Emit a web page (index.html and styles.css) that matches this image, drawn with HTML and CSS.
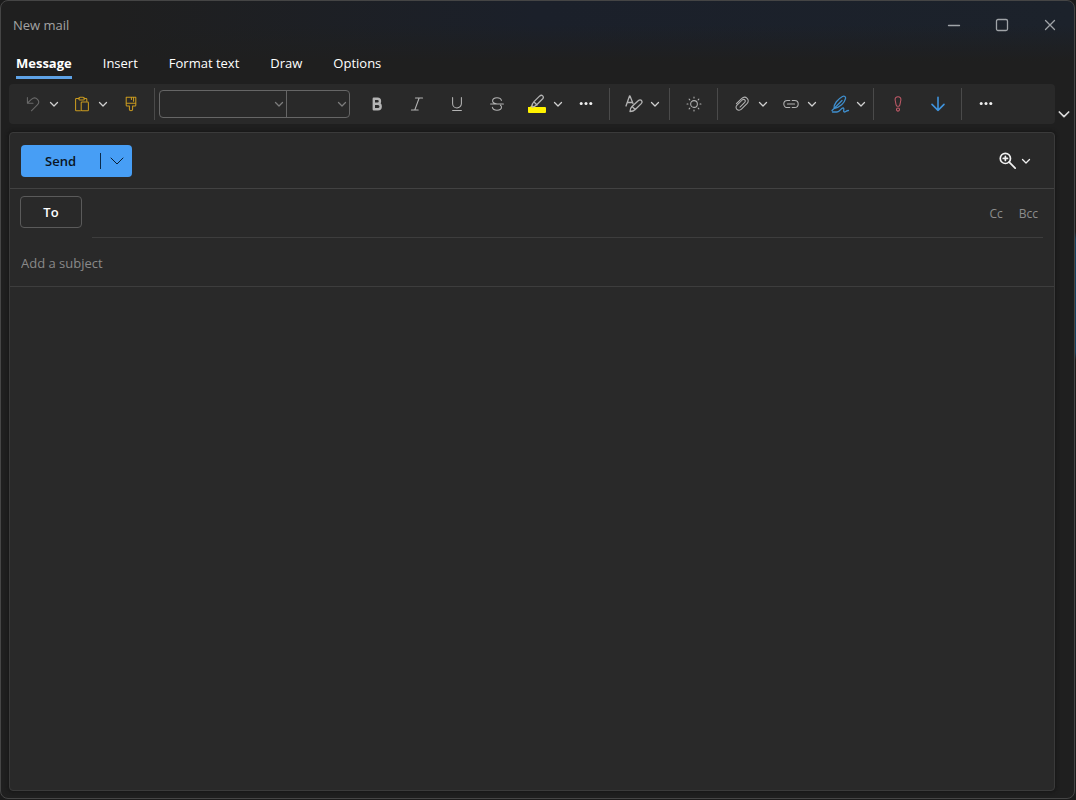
FILE: index.html
```html
<!DOCTYPE html>
<html lang="en">
<head>
  <meta charset="utf-8">
  <title>New mail</title>
  <meta name="viewport" content="width=device-width, initial-scale=1">
  <link rel="stylesheet" href="styles.css">
</head>
<body>
  <!-- Shared chevron -->
  <svg class="defs" aria-hidden="true">
    <symbol id="chevron" viewBox="0 0 12 12"><path d="M2.500 4.500 6 8l3.500-3.500"/></symbol>
  </svg>

  <div class="window">
    <header class="titlebar">
      <h1>New mail</h1>
      <div class="window-buttons">
        <button type="button" aria-label="Minimize"><svg viewBox="0 0 16 16"><path d="M2.500 8.500h11"/></svg></button>
        <button type="button" aria-label="Maximize"><svg viewBox="0 0 16 16"><rect x="2.500" y="2.500" width="11" height="11" rx="1.500"/></svg></button>
        <button type="button" aria-label="Close"><svg viewBox="0 0 16 16"><path d="m3.500 3.500 9 9M12.500 3.500l-9 9"/></svg></button>
      </div>
    </header>

    <nav class="tabs">
      <button type="button" class="tab active">Message</button>
      <button type="button" class="tab">Insert</button>
      <button type="button" class="tab">Format text</button>
      <button type="button" class="tab">Draw</button>
      <button type="button" class="tab">Options</button>
    </nav>

    <div class="ribbon-row">
      <div class="ribbon">
        <div class="group">
          <div class="split">
            <button type="button" class="icon-btn dim" aria-label="Undo"><svg viewBox="0 0 20 20"><path d="M3 2v7h7M3.300 8.700 8 4.300c2.300-2.100 5.600-2.200 7.600-.2 2 2.100 1.900 5-.2 7.100L8 18.500"/></svg></button>
            <button type="button" class="chev" aria-label="Undo options"><svg><use href="#chevron"/></svg></button>
          </div>
          <div class="split">
            <button type="button" class="icon-btn gold" aria-label="Paste"><svg viewBox="0 0 20 20"><path d="M6.500 3H3a1 1 0 0 0-1 1v13.500a1 1 0 0 0 1 1h5M12.500 3H15a1 1 0 0 1 1 1v2.500"/><rect x="6" y="1.500" width="7" height="3.500" rx="1.700"/><rect x="9" y="7.500" width="9" height="11" rx="1"/></svg></button>
            <button type="button" class="chev" aria-label="Paste options"><svg><use href="#chevron"/></svg></button>
          </div>
          <button type="button" class="icon-btn gold" aria-label="Format painter"><svg viewBox="0 0 20 20"><path d="M4 1.500h12v10a1 1 0 0 1-1 1h-3v4a2 2 0 0 1-4 0v-4H5a1 1 0 0 1-1-1zM4 9h12M10.500 1.500v3M13.200 1.500v5"/></svg></button>
        </div>

        <div class="group format">
          <div class="combo">
            <div class="pick font">
              <select aria-label="Font"><option></option></select>
              <svg><use href="#chevron"/></svg>
            </div>
            <div class="pick size">
              <select aria-label="Font size"><option></option></select>
              <svg><use href="#chevron"/></svg>
            </div>
          </div>
          <button type="button" class="icon-btn" aria-label="Bold"><svg class="bold" viewBox="0 0 20 20"><path d="M6 3.500v13h5.200a3.400 3.400 0 0 0 0-6.800H6h4.600a3.100 3.100 0 0 0 0-6.200z"/></svg></button>
          <button type="button" class="icon-btn" aria-label="Italic"><svg viewBox="0 0 20 20"><path d="M8 2.500h9M3 17.500h8.500M12.700 2.500l-5.500 15"/></svg></button>
          <button type="button" class="icon-btn" aria-label="Underline"><svg viewBox="0 0 20 20"><path d="M4.500 2v7.500a5.500 5.500 0 0 0 11 0V2M4.500 18h11"/></svg></button>
          <button type="button" class="icon-btn" aria-label="Strikethrough"><svg viewBox="0 0 20 20"><path d="M15.500 5.500C15 3.400 12.900 2.200 10 2.200c-3 0-5.500 1.500-5.500 4 0 2.100 1.900 3.100 5.500 3.800M2 10h16M14.300 11.500c.9.600 1.300 1.300 1.300 2.300 0 2.400-2.400 4-5.600 4-3 0-5.200-1.300-5.800-3.600"/></svg></button>
          <div class="split">
            <button type="button" class="icon-btn" aria-label="Highlight color"><svg class="wide" viewBox="0 0 20 20"><path class="marker" d="M1 13h2l2-2 3 2h10a1 1 0 0 1 1 1v4a1 1 0 0 1-1 1H2a1 1 0 0 1-1-1z"/><path class="pen" d="M5 13c-.3-2.700.3-3.700 2-5.400l5.800-5.700c1-.9 2.200-.7 2.900 0s.8 1.900 0 2.800L10 10.500C8.300 12.300 7.300 13 5 13zM7 8l3 3"/></svg></button>
            <button type="button" class="chev" aria-label="Highlight options"><svg><use href="#chevron"/></svg></button>
          </div>
          <button type="button" class="icon-btn dots" aria-label="More formatting"><svg viewBox="0 0 20 20"><circle cx="4" cy="9.500" r="1.900"/><circle cx="10" cy="9.500" r="1.900"/><circle cx="16" cy="9.500" r="1.900"/></svg></button>
        </div>

        <div class="group">
          <div class="split">
            <button type="button" class="icon-btn" aria-label="Styles"><svg class="wide" viewBox="0 0 20 20"><path d="m2 12 3.500-10h.500l3 7.500M3.500 8.500h4.500M8 12.500l6.500-6c1-.9 2.300-.8 3 0s.8 2 0 2.900l-6.200 6.100c-1.500 1.400-2.800 2-5.300 2 0-2.500.5-3.600 2-5zM8 12.500l3.300 3"/></svg></button>
            <button type="button" class="chev" aria-label="Style options"><svg><use href="#chevron"/></svg></button>
          </div>
        </div>

        <div class="group">
          <button type="button" class="icon-btn" aria-label="Switch background"><svg viewBox="0 0 20 20"><circle cx="10" cy="10" r="4.200"/><path d="M10 1.300v1.200M10 17.500v1.200M1.300 10h1.200M17.500 10h1.200M3.900 3.900l.9.900M15.200 15.200l.9.900M3.900 16.100l.9-.9M15.200 4.800l.9-.9"/></svg></button>
        </div>

        <div class="group attach">
          <div class="split">
            <button type="button" class="icon-btn" aria-label="Attach file"><svg viewBox="0 0 20 20"><path d="m3 9.500 6.500-6.300c2.200-2 5-2.100 6.900-.3s1.800 4.600-.2 6.700l-6.900 6.900c-1.700 1.700-4.200 1.700-5.700.2s-1.400-3.800.2-5.400L10.300 5c1-1 2.400-1 3.200-.1s.8 2.100-.1 3.100L7.500 13.800"/></svg></button>
            <button type="button" class="chev" aria-label="Attach options"><svg><use href="#chevron"/></svg></button>
          </div>
          <div class="split">
            <button type="button" class="icon-btn" aria-label="Link"><svg viewBox="0 0 20 20"><path d="M8.500 14.500H5.500a4.500 4.500 0 0 1 0-9h3M11.500 5.500h3a4.500 4.500 0 0 1 0 9h-3M5.500 10h9"/></svg></button>
            <button type="button" class="chev" aria-label="Link options"><svg><use href="#chevron"/></svg></button>
          </div>
          <div class="split">
            <button type="button" class="icon-btn blue" aria-label="Signature"><svg class="wide" viewBox="0 0 20 20"><path d="M4 14.500C3.500 10 8 5 12.500 2.500c1.800-1 3.500.3 3 2.200C14.500 9 10 13.500 4 14.500zM2 16.500 12 6.500M2.500 18H7c3 0 4-4 6-4s-.5 4 1.500 4c1.300 0 1.500-1.500 4-1.500"/></svg></button>
            <button type="button" class="chev" aria-label="Signature options"><svg><use href="#chevron"/></svg></button>
          </div>
        </div>

        <div class="group priority">
          <button type="button" class="icon-btn red" aria-label="High importance"><svg viewBox="0 0 20 20"><path d="M10 1c2.400 0 3.900 1.700 3.600 4l-1.300 6.300c-.4 2.100-4.200 2.100-4.600 0L6.400 5C6.100 2.700 7.600 1 10 1z"/><circle cx="10" cy="17" r="1.900"/></svg></button>
          <button type="button" class="icon-btn arrow" aria-label="Low importance"><svg viewBox="0 0 20 20"><path d="M10 1.500V18M2.500 10.500 10 18l7.500-7.500"/></svg></button>
        </div>

        <div class="group">
          <button type="button" class="icon-btn dots" aria-label="More options"><svg viewBox="0 0 20 20"><circle cx="4" cy="9.500" r="1.900"/><circle cx="10" cy="9.500" r="1.900"/><circle cx="16" cy="9.500" r="1.900"/></svg></button>
        </div>
      </div>
      <button type="button" class="collapse" aria-label="Ribbon display options"><svg><use href="#chevron"/></svg></button>
    </div>

    <main class="compose">
      <div class="send-row">
        <div class="send">
          <button type="button" class="send-btn">Send</button>
          <button type="button" class="send-more" aria-label="More send options"><svg viewBox="0 0 14 14"><path d="m1 4 6 6 6-6"/></svg></button>
        </div>
        <button type="button" class="zoom" aria-label="Zoom">
          <svg class="lens" viewBox="0 0 20 20"><circle cx="7.500" cy="7.500" r="6"/><path d="M7.500 5v5M5 7.500h5M12 12l7 7"/></svg>
          <svg class="small"><use href="#chevron"/></svg>
        </button>
      </div>
      <div class="to-row">
        <button type="button" class="to-btn">To</button>
        <div class="to-field">
          <input type="text" aria-label="To">
          <button type="button">Cc</button>
          <button type="button">Bcc</button>
        </div>
      </div>
      <input type="text" class="subject" aria-label="Subject" placeholder="Add a subject">
      <textarea class="message" aria-label="Message body"></textarea>
    </main>
  </div>
</body>
</html>
```

FILE: styles.css
```css
* {
  box-sizing: border-box;
}
body {
  margin: 0;
  min-height: 100vh;
  display: flex;
  padding: 0 1px 1px 0;
  background: linear-gradient(#1b1b1b 29%, #123f5c 30%, #123f5c 44%, #1b1b1b 45%);
  font-family: "Open Sans", "Noto Sans", sans-serif;
  font-size: 13px;
  color: #fff;
}
button,
input,
select,
textarea {
  font: inherit;
  color: inherit;
  background: none;
  border: none;
  padding: 0;
  margin: 0;
  outline: none;
}
svg {
  display: block;
  fill: none;
  stroke: currentColor;
  stroke-width: 1.3;
  stroke-linecap: round;
  stroke-linejoin: round;
}
.defs {
  position: absolute;
  width: 0;
  height: 0;
}
.window {
  flex: 1;
  min-width: 0;
  display: flex;
  flex-direction: column;
  padding: 0 19px 7px 8px;
  border: 1px solid #454545;
  border-radius: 8px;
  background:
    linear-gradient(transparent 24px, #1f1f1f 60px),
    linear-gradient(90deg, #1f1f1f 10%, #1b202a 50%, #1c222b);
}

/* Title bar */
.titlebar {
  display: flex;
  justify-content: space-between;
  align-items: center;
  height: 48px;
  padding-left: 4px;
}
.titlebar h1 {
  margin: 0;
  font-size: 13px;
  font-weight: 400;
  color: #a3a3a3;
}
.window-buttons {
  display: flex;
  margin-right: -19px;
  color: #a0a4a8;
}
.window-buttons button {
  width: 48px;
  height: 32px;
  display: grid;
  place-items: center;
}
.window-buttons svg {
  width: 16px;
  height: 16px;
}

/* Ribbon tabs */
.tabs {
  display: flex;
  gap: 31px;
  height: 35px;
  padding: 1px 0 0 7px;
}
.tab {
  height: 29px;
  border-bottom: 3px solid transparent;
}
.tab.active {
  font-weight: 700;
  border-color: #5ea2e6;
}

/* Ribbon */
.ribbon-row {
  display: flex;
  margin-right: -19px;
}
.ribbon {
  flex: 1;
  display: flex;
  align-items: center;
  height: 40px;
  border-radius: 4px;
  background: #292929;
}
.group {
  display: flex;
  align-items: center;
  gap: 7px;
  height: 32px;
  padding: 0 8px 0 9px;
  border-right: 1px solid #4a4a4a;
  color: #b4b4b4;
}
.group:last-child {
  border-right: none;
}
.format {
  gap: 10px;
  padding-left: 4px;
}
.format .dots {
  margin-left: -3px;
}
.priority {
  gap: 10px;
}
.attach {
  padding-right: 6px;
}
.split {
  display: flex;
}
.icon-btn {
  width: 30px;
  height: 30px;
  display: grid;
  place-items: center;
}
.icon-btn svg {
  width: 16px;
  height: 16px;
}
.icon-btn .wide {
  width: 20px;
  height: 20px;
}
.icon-btn .bold {
  stroke-width: 3;
}
.chev {
  width: 12px;
  color: #d0d0d0;
}
.chev svg {
  width: 12px;
  height: 12px;
}
.dim {
  color: #6a6a6a;
}
.gold {
  color: #c99a1f;
}
.blue {
  color: #3f8fce;
}
.red {
  color: #c05a68;
}
.arrow {
  color: #3f93dc;
}
.arrow svg {
  stroke-width: 2;
}
.icon-btn.dots svg {
  fill: #f0f0f0;
  stroke: none;
}
.marker {
  fill: #fff200;
  stroke: none;
}
.pen {
  fill: #292929;
}
.combo {
  display: flex;
  height: 28px;
  margin-right: 2px;
  border: 1px solid #666;
  border-radius: 4px;
}
.pick {
  display: grid;
  align-items: center;
  color: #7c7c7c;
}
.pick select,
.pick svg {
  grid-area: 1 / 1;
}
.pick select {
  appearance: none;
  width: 100%;
  height: 26px;
}
.pick svg {
  width: 12px;
  height: 12px;
  margin-right: 1px;
  justify-self: end;
  pointer-events: none;
}
.font {
  width: 127px;
  border-right: 1px solid #666;
}
.size {
  width: 62px;
}
.collapse {
  width: 19px;
  padding: 20px 0 0 1px;
  color: #d8d8d8;
}
.collapse svg {
  width: 16px;
  height: 16px;
}

/* Compose card */
.compose {
  flex: 1;
  display: flex;
  flex-direction: column;
  margin-top: 8px;
  border: 1px solid #3a3a3a;
  border-radius: 4px;
  background: #292929;
  box-shadow: 0 0 4px #111;
}
.send-row {
  display: flex;
  align-items: center;
  justify-content: space-between;
  height: 56px;
  padding: 0 22px 0 11px;
  border-bottom: 1px solid #424242;
}
.send {
  display: flex;
  align-items: center;
  height: 32px;
  border-radius: 4px;
  background: #479ef5;
  color: #0b1f33;
}
.send-btn {
  width: 79px;
  height: 32px;
  font-weight: 600;
  color: #0a1422;
}
.send-more {
  width: 32px;
  height: 16px;
  border-left: 1px solid #0a2a4a;
  display: grid;
  place-items: center;
}
.send-more svg {
  width: 14px;
  height: 14px;
  stroke-width: 1;
}
.zoom {
  display: flex;
  align-items: center;
  gap: 4px;
  color: #f0f0f0;
}
.lens {
  width: 17px;
  height: 17px;
  stroke-width: 2;
}
.small {
  width: 12px;
  height: 12px;
}
.to-row {
  display: flex;
  gap: 10px;
  height: 49px;
  padding: 0 11px 0 10px;
}
.to-btn {
  width: 62px;
  height: 32px;
  margin-top: 7px;
  border: 1px solid #5a5a5a;
  border-radius: 4px;
  font-weight: 600;
}
.to-field {
  flex: 1;
  display: flex;
  align-items: center;
  gap: 16px;
  padding-right: 5px;
  border-bottom: 1px solid #3d3d3d;
}
.to-field input {
  flex: 1;
  min-width: 0;
  height: 32px;
}
.to-field button {
  font-size: 12px;
  color: #8c8c8c;
}
.subject {
  height: 49px;
  padding: 1px 11px 0 11px;
  border-bottom: 1px solid #3d3d3d;
}
.subject::placeholder {
  color: #8a8a8a;
  opacity: 1;
}
.message {
  flex: 1;
  padding: 12px;
  resize: none;
}
```
